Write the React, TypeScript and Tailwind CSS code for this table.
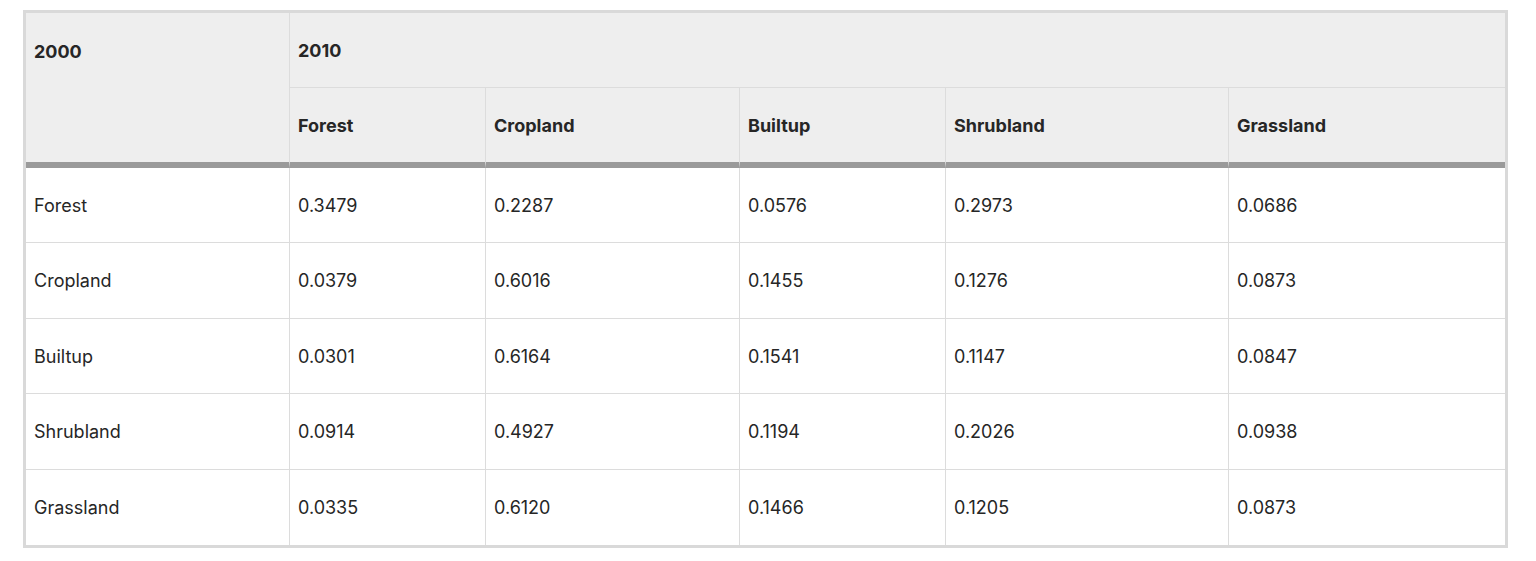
import React from "react";

const cols = ["Forest", "Cropland", "Builtup", "Shrubland", "Grassland"];
const rows: [string, string[]][] = [
  ["Forest", ["0.3479", "0.2287", "0.0576", "0.2973", "0.0686"]],
  ["Cropland", ["0.0379", "0.6016", "0.1455", "0.1276", "0.0873"]],
  ["Builtup", ["0.0301", "0.6164", "0.1541", "0.1147", "0.0847"]],
  ["Shrubland", ["0.0914", "0.4927", "0.1194", "0.2026", "0.0938"]],
  ["Grassland", ["0.0335", "0.6120", "0.1466", "0.1205", "0.0873"]],
];

export default function App() {
  return (
    <div className="bg-white w-[1536px] h-[561px] pt-[10px] pl-[23px]" style={{ fontFamily: "Inter, 'Liberation Sans', sans-serif" }}>
      <div className="w-[1485px] border-[3px] border-[#d9d9d9]">
        <table className="table-fixed w-[1479px] border-separate border-spacing-0 text-[18px] text-[#262626]">
          <colgroup>
            <col className="w-[264px]" />
            <col className="w-[196px]" />
            <col className="w-[254px]" />
            <col className="w-[206px]" />
            <col className="w-[283px]" />
            <col className="w-[276px]" />
          </colgroup>
          <thead className="bg-[#eeeeee]">
            <tr className="h-[75px]">
              <th rowSpan={2} className="align-top text-left font-bold pl-2 pt-[25px] border-r border-[#dcdcdc] border-b-[6px] border-b-[#9a9a9a]">
                2000
              </th>
              <th colSpan={5} className="text-left font-bold pl-2 border-b border-[#dcdcdc]">
                2010
              </th>
            </tr>
            <tr className="h-[80px]">
              {cols.map((c, i) => (
                <th
                  key={c}
                  className={`text-left font-bold pl-2 border-b-[6px] border-b-[#9a9a9a] ${i < 4 ? "border-r border-r-[#dcdcdc]" : ""}`}
                >
                  {c}
                </th>
              ))}
            </tr>
          </thead>
          <tbody>
            {rows.map(([name, vals], ri) => (
              <tr key={name} className={ri === 1 || ri === 3 ? "h-[76px]" : "h-[75px]"}>
                <td className={`pl-2 border-r border-[#dcdcdc] ${ri < 4 ? "border-b" : ""}`}>{name}</td>
                {vals.map((v, i) => (
                  <td
                    key={i}
                    className={`pl-2 border-[#dcdcdc] ${i < 4 ? "border-r" : ""} ${ri < 4 ? "border-b" : ""}`}
                  >
                    {v}
                  </td>
                ))}
              </tr>
            ))}
          </tbody>
        </table>
      </div>
    </div>
  );
}
